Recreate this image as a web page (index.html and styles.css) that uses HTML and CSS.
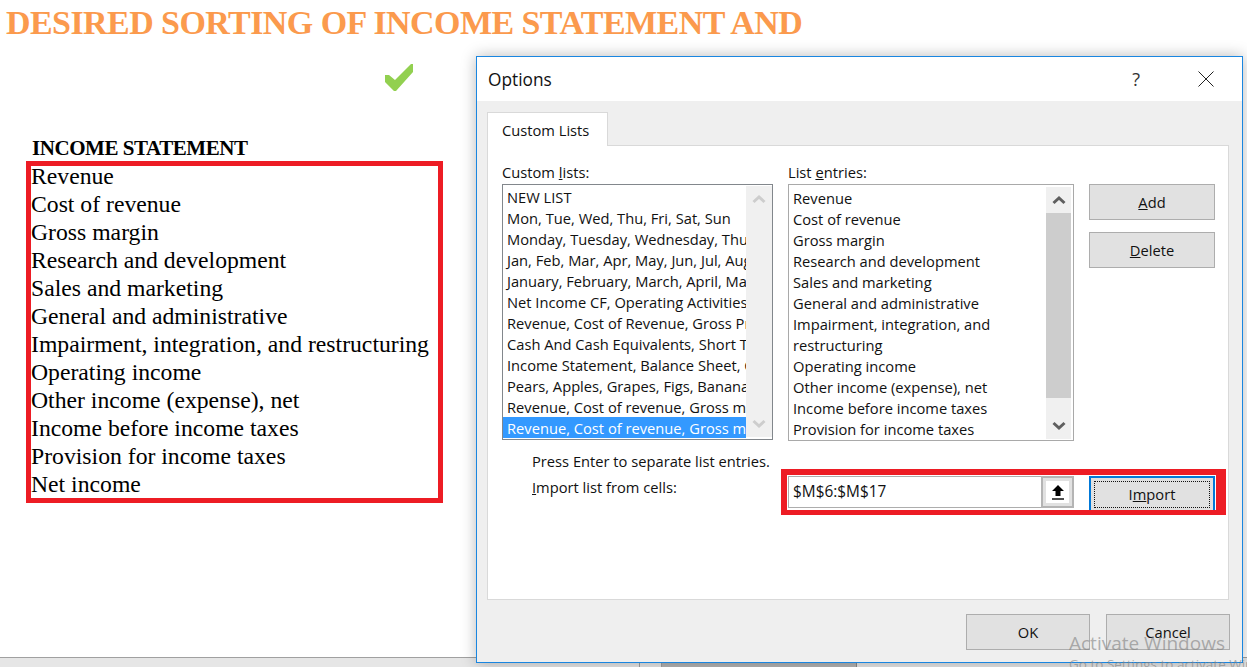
FILE: index.html
```html
<!DOCTYPE html>
<html lang="en">
<head>
<meta charset="utf-8">
<title>Custom Lists</title>
<link rel="stylesheet" href="styles.css">
</head>
<body>
<main class="sheet">
  <h1 class="sheet-title">DESIRED SORTING OF INCOME STATEMENT AND</h1>
  <div class="check-row">
    <svg class="check" width="28" height="27" viewBox="0 0 28 27"><path d="M0 11 L0 18 L9 27 L11 27 L28 8 L28 0 L26 0 L10 16 L4 11 Z" fill="#92d050"/></svg>
  </div>
  <h2 class="stmt-title">INCOME STATEMENT</h2>
  <ul class="stmt-list">
    <li>Revenue</li>
    <li>Cost of revenue</li>
    <li>Gross margin</li>
    <li>Research and development</li>
    <li>Sales and marketing</li>
    <li>General and administrative</li>
    <li>Impairment, integration, and restructuring</li>
    <li>Operating income</li>
    <li>Other income (expense), net</li>
    <li>Income before income taxes</li>
    <li>Provision for income taxes</li>
    <li>Net income</li>
  </ul>
</main>
<footer class="statusbar">
  <span class="bar-cell"></span>
  <span class="bar-thumb"></span>
</footer>

<section class="dialog">
  <header class="dialog-head">
    <span class="dialog-title">Options</span>
    <span class="dialog-help">?</span>
    <svg class="dialog-close" width="16" height="16" viewBox="0 0 16 16"><path d="M0.5 0.5 L15.5 15.5 M15.5 0.5 L0.5 15.5" stroke="#222" stroke-width="1" fill="none"/></svg>
  </header>
  <div class="dialog-body">
    <div class="tab">Custom Lists</div>
    <div class="panel">
      <div class="lists-row">
        <div class="list-col list-col-a">
          <label class="list-label">Custom <u>l</u>ists:</label>
          <div class="listbox listbox-a">
            <ul class="items items-custom">
              <li>NEW LIST</li>
              <li>Mon, Tue, Wed, Thu, Fri, Sat, Sun</li>
              <li>Monday, Tuesday, Wednesday, Thursday, Friday</li>
              <li>Jan, Feb, Mar, Apr, May, Jun, Jul, Aug, Sep</li>
              <li>January, February, March, April, May, June</li>
              <li>Net Income CF, Operating Activities, Investing</li>
              <li>Revenue, Cost of Revenue, Gross Profit, Research</li>
              <li>Cash And Cash Equivalents, Short Term Investments</li>
              <li>Income Statement, Balance Sheet, Cash Flow</li>
              <li>Pears, Apples, Grapes, Figs, Bananas, Oranges</li>
              <li>Revenue, Cost of revenue, Gross margin, Research</li>
              <li class="selected">Revenue, Cost of revenue, Gross margin, Research</li>
            </ul>
            <div class="scroll scroll-a">
              <span class="scroll-btn"><svg width="16" height="10" viewBox="0 0 16 10"><path d="M2.5 8 L8 3 L13.5 8" stroke="#cdcdcd" stroke-width="3" fill="none"/></svg></span>
              <span class="scroll-track"></span>
              <span class="scroll-btn"><svg width="16" height="10" viewBox="0 0 16 10"><path d="M2.5 2 L8 7 L13.5 2" stroke="#cdcdcd" stroke-width="3" fill="none"/></svg></span>
            </div>
          </div>
        </div>
        <div class="list-col list-col-b">
          <label class="list-label">List <u>e</u>ntries:</label>
          <div class="listbox listbox-light">
            <ul class="items items-entries">
              <li>Revenue</li>
              <li>Cost of revenue</li>
              <li>Gross margin</li>
              <li>Research and development</li>
              <li>Sales and marketing</li>
              <li>General and administrative</li>
              <li>Impairment, integration, and</li>
              <li>restructuring</li>
              <li>Operating income</li>
              <li>Other income (expense), net</li>
              <li>Income before income taxes</li>
              <li>Provision for income taxes</li>
            </ul>
            <div class="scroll scroll-b">
              <span class="scroll-btn"><svg width="16" height="10" viewBox="0 0 16 10"><path d="M2.5 8 L8 3 L13.5 8" stroke="#5f5f5f" stroke-width="3" fill="none"/></svg></span>
              <span class="scroll-track"><span class="scroll-thumb"></span></span>
              <span class="scroll-btn"><svg width="16" height="10" viewBox="0 0 16 10"><path d="M2.5 2 L8 7 L13.5 2" stroke="#5f5f5f" stroke-width="3" fill="none"/></svg></span>
            </div>
          </div>
        </div>
        <div class="side-buttons">
          <button class="btn" type="button"><u>A</u>dd</button>
          <button class="btn" type="button"><u>D</u>elete</button>
        </div>
      </div>
      <div class="import-area">
        <div class="import-labels">
          <p>Press Enter to separate list entries.</p>
          <p><u>I</u>mport list from cells:</p>
        </div>
        <div class="import-input">
          <span class="import-value">$M$6:$M$17</span>
          <span class="ref-btn"><span class="ref-face"><svg width="12" height="15" viewBox="0 0 12 15"><path d="M6 0 L12 6 L8.5 6 L8.5 11 L3.5 11 L3.5 6 L0 6 Z" fill="#000"/><path d="M0 14 H12" stroke="#000" stroke-width="1.4"/></svg></span></span>
        </div>
        <button class="btn btn-import" type="button"><span class="btn-focus">I<u>m</u>port</span></button>
        <div class="red-mark"></div>
      </div>
    </div>
    <div class="dialog-foot">
      <button class="btn btn-foot" type="button">OK</button>
      <button class="btn btn-foot" type="button">Cancel</button>
    </div>
  </div>
</section>

<aside class="watermark">
  <div class="wm-main">Activate Windows</div>
  <div class="wm-sub">Go to Settings to activate Windows.</div>
</aside>
</body>
</html>
```

FILE: styles.css
```css
* { box-sizing: border-box; }
html, body { margin: 0; padding: 0; }
body {
  width: 1247px;
  height: 667px;
  overflow: hidden;
  background: #fff;
  position: relative;
  display: flex;
  flex-direction: column;
  font-family: "Open Sans", "Liberation Sans", sans-serif;
}
.sheet {
  flex: 1;
  padding: 0 0 0 26px;
  font-family: "Liberation Serif", serif;
  color: #000;
}
.sheet-title {
  margin: 0 0 0 -20px;
  font-size: 34px;
  letter-spacing: -0.57px;
  line-height: 46px;
  font-weight: 700;
  color: #fb9a4d;
  white-space: nowrap;
}
.check-row {
  height: 88px;
  padding: 18px 0 0 359px;
}
.check { display: block; }
.stmt-title {
  margin: 0 0 0 6px;
  padding-top: 1px;
  font-size: 21px;
  letter-spacing: -0.45px;
  line-height: 26px;
  font-weight: 700;
}
.stmt-list {
  list-style: none;
  margin: 0;
  padding: 0;
  width: 417px;
  height: 342px;
  border: 5px solid #ed1c24;
  font-size: 23.7px;
  line-height: 28px;
  white-space: nowrap;
}
.stmt-list li:first-child { margin-top: -4px; }
.statusbar {
  height: 10px;
  flex: none;
  display: flex;
  padding-left: 639px;
  background: #e6e6e6;
  border-top: 1px solid #a0a0a0;
}
.bar-cell {
  width: 23px;
  border-left: 1px solid #a0a0a0;
  border-right: 1px solid #a0a0a0;
}
.bar-thumb {
  width: 195px;
  background: #b4b4b4;
  border-right: 1px solid #8a8a8a;
}
.dialog {
  position: absolute;
  left: 476px;
  top: 56px;
  width: 767px;
  height: 607px;
  border: 1px solid #1a86e0;
  background: #efefef;
  box-shadow: 0 0 14px rgba(0, 0, 0, 0.28);
  display: flex;
  flex-direction: column;
  font-size: 14.7px;
  color: #111;
}
.dialog-head {
  height: 44px;
  background: #fff;
  display: flex;
  align-items: center;
  padding: 0 28px 0 11px;
  flex: none;
}
.dialog-title { font-size: 17.3px; flex: 1; }
.dialog-help { font-size: 18px; margin-right: 58px; color: #333; }
.dialog-close { display: block; }
.dialog-body {
  flex: 1;
  padding: 11px 0 0 10px;
  display: flex;
  flex-direction: column;
}
.tab {
  width: 121px;
  height: 34px;
  background: #fff;
  border: 1px solid #d9d9d9;
  border-bottom: 0;
  padding-left: 14px;
  line-height: 35px;
  margin-bottom: -1px;
  position: relative;
  z-index: 1;
}
.panel {
  width: 742px;
  height: 455px;
  background: #fff;
  border: 1px solid #d9d9d9;
  padding: 16px 0 0 14px;
  position: relative;
}
.lists-row { display: flex; align-items: flex-start; }
.list-col-a { width: 271px; margin-right: 15px; }
.list-col-b { width: 286px; margin-right: 15px; }
.list-label { display: block; height: 22px; line-height: 20px; }
.listbox {
  height: 257px;
  border: 1px solid #82878c;
  display: flex;
  overflow: hidden;
  background: #fff;
}
.listbox-a { height: 256px; }
.listbox-light { border-color: #a9a9a9; }
.items {
  list-style: none;
  margin: 0;
  padding: 1px 0 0;
  flex: 1;
  min-width: 0;
  overflow: hidden;
  line-height: 21px;
  white-space: nowrap;
}
.items li { padding-left: 4px; height: 21px; overflow: hidden; }
.items-custom li { line-height: 22px; }
.items-entries { padding-top: 3px; }
.items .selected { background: #3399ff; color: #fff; }
.scroll {
  flex: none;
  background: #f0f0f0;
  display: flex;
  flex-direction: column;
}
.scroll-a { width: 26px; margin: 1px 0 2px 0; }
.scroll-b { width: 25px; margin: 2px 2px 1px 0; }
.scroll-btn {
  height: 26px;
  flex: none;
  display: flex;
  align-items: center;
  justify-content: center;
}
.scroll-track { flex: 1; display: block; }
.scroll-thumb { display: block; height: 185px; background: #cdcdcd; }
.side-buttons { width: 126px; padding-top: 22px; display: flex; flex-direction: column; gap: 12px; }
.btn {
  width: 126px;
  height: 36px;
  background: #e1e1e1;
  border: 1px solid #adadad;
  color: #111;
  font: inherit;
  padding: 0;
}
.import-area {
  position: relative;
  display: flex;
  align-items: flex-start;
  margin-top: 8px;
}
.import-labels { width: 286px; padding: 0 0 0 30px; margin-top: -1px; }
.import-labels p { margin: 0; white-space: nowrap; line-height: 26px; }
.import-input {
  width: 286px;
  height: 32px;
  margin-top: 27px;
  border: 1px solid #adadad;
  display: flex;
  align-items: stretch;
  background: #fff;
}
.import-value { flex: 1; padding-left: 4px; line-height: 30px; font-size: 15.4px; }
.ref-btn {
  width: 33px;
  flex: none;
  background: #e1e1e1;
  border: 2px solid #b4b4b4;
  padding: 3px;
  display: flex;
  margin: -1px -1px;
}
.ref-face {
  flex: 1;
  background: #fff;
  display: flex;
  align-items: center;
  justify-content: center;
}
.btn-import {
  margin: 27px 0 0 15px;
  height: 37px;
  border: 2px solid #0078d7;
  padding: 3px;
}
.btn-focus {
  display: block;
  height: 100%;
  line-height: 25px;
  border: 1px dotted #111;
}
.red-mark {
  position: absolute;
  left: 279px;
  top: 20px;
  width: 445px;
  height: 46px;
  border: 6px solid #ed1c24;
  border-right-width: 10px;
  border-bottom-width: 5px;
  pointer-events: none;
}
.dialog-foot {
  display: flex;
  justify-content: flex-end;
  gap: 16px;
  padding: 14px 12px 0 0;
}
.btn-foot { width: 124px; }
.watermark {
  position: absolute;
  left: 1069px;
  top: 632px;
  width: 178px;
  height: 35px;
  overflow: hidden;
  color: rgba(130, 130, 130, 0.62);
  white-space: nowrap;
}
.wm-main { font-size: 19px; line-height: 23px; }
.wm-sub { font-size: 13.5px; line-height: 18px; }
```
